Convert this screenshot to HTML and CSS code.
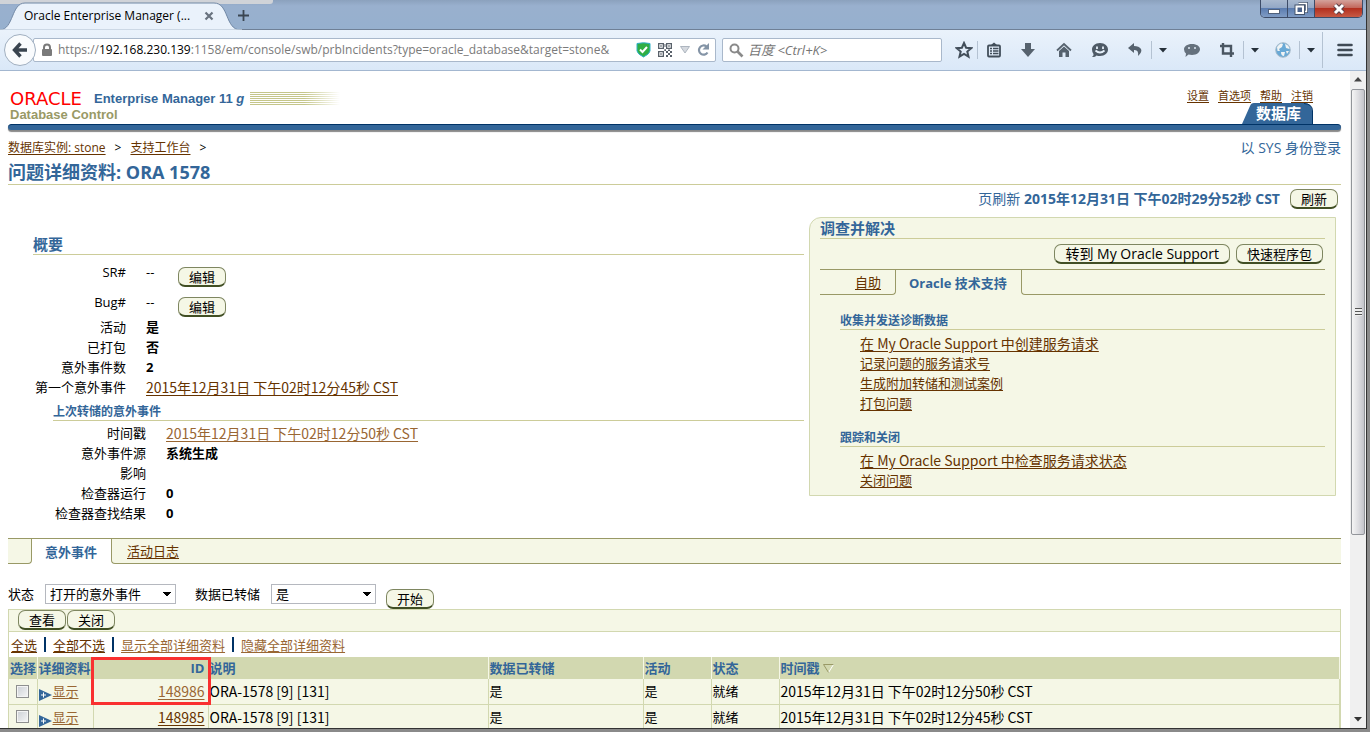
FILE: index.html
```html
<!DOCTYPE html>
<html lang="zh-CN">
<head>
<meta charset="utf-8">
<title>Oracle Enterprise Manager</title>
<link rel="stylesheet" href="styles.css">
</head>
<body>
<div class="window">
  <div class="titlebar">
    <div class="backdrop-tab"></div>
    <div class="tab">
      <svg class="tab-shape" width="242" height="30" viewBox="0 0 242 30"><path d="M0 30C14 29 11 3 25 3H214C229 3 225 29 240 30Z" fill="#eaf2fb" stroke="#7188a5"/><path d="M0 30H242" stroke="#eaf2fb"/></svg>
      <span class="tab-title">Oracle Enterprise Manager (...</span>
      <button class="plain tab-close" aria-label="关闭标签"><svg width="10" height="10" viewBox="0 0 10 10"><path d="M1.500 1.500L8.500 8.500M8.500 1.500L1.500 8.500" stroke="#69737f" stroke-width="2.200"/></svg></button>
    </div>
    <button class="plain tab-new" aria-label="新标签"><svg width="11" height="11" viewBox="0 0 11 11"><path d="M5.500 0V11M0 5.500H11" stroke="#3b4652" stroke-width="1.800"/></svg></button>
    <div class="win-controls">
      <button class="win-btn" aria-label="最小化"><svg width="14" height="12" viewBox="0 0 14 12"><rect x="1.500" y="6.500" width="11" height="4" fill="#fff" stroke="#50617c"/></svg></button>
      <button class="win-btn" aria-label="还原"><svg width="14" height="13" viewBox="0 0 14 13"><path d="M4.500 1.500H12.500V9.500H10" fill="none" stroke="#46566f" stroke-width="3"/><path d="M4.500 1.500H12.500V9.500H10" fill="none" stroke="#fff" stroke-width="1.400"/><rect x="2.500" y="4.500" width="6.500" height="6.500" fill="#4c648d" stroke="#46566f" stroke-width="4"/><rect x="2.500" y="4.500" width="6.500" height="6.500" fill="#4c648d" stroke="#fff" stroke-width="2"/></svg></button>
      <button class="win-btn win-close" aria-label="关闭"><svg width="14" height="12" viewBox="0 0 14 12"><path d="M3 2L11 10M11 2L3 10" stroke="#5b4048" stroke-width="5"/><path d="M3 2L11 10M11 2L3 10" stroke="#fff" stroke-width="3"/></svg></button>
    </div>
  </div>

  <div class="toolbar">
    <button class="plain back" aria-label="后退"><svg width="16" height="16" viewBox="0 0 16 16"><path d="M8.500 1.500L2.500 8L8.500 14.500M3 8H15" fill="none" stroke="#39444f" stroke-width="3.400"/></svg></button>
    <div class="urlbar">
      <svg width="12" height="14" viewBox="0 0 12 14"><path d="M3 7V4.500a3 3 0 0 1 6 0V7" fill="none" stroke="#7a7a7a" stroke-width="2"/><rect x="1" y="6" width="10" height="7" rx="1" fill="#7a7a7a"/></svg>
      <div class="url">https://<b>192.168.230.139</b>:1158/em/console/swb/prbIncidents?type=oracle_database&amp;target=stone&amp;</div>
      <svg width="15" height="16" viewBox="0 0 15 16"><path d="M1 1.500Q7.500 0 14 1.500V9Q13.500 12 7.500 15Q1.500 12 1 9Z" fill="#2fae44" stroke="#2fb0c8"/><path d="M4 7.500L6.500 10L11 5" fill="none" stroke="#fff" stroke-width="2"/></svg>
      <svg width="15" height="15" viewBox="0 0 15 15" fill="#59616a"><path fill-rule="evenodd" d="M0 0H6V6H0ZM1.300 1.300V4.700H4.700V1.300ZM8 0H14V6H8ZM9.300 1.300V4.700H12.700V1.300ZM0 8H6V14H0ZM1.300 9.300V12.700H4.700V9.300Z"/><path d="M2.300 2.300H3.700V3.700H2.300ZM10.300 2.300H11.700V3.700H10.300ZM2.300 10.300H3.700V11.700H2.300ZM6.500 1H7.500V4H6.500ZM8 8H10V10H8ZM12 8H14V10H12ZM10 10H12V12H10ZM8 12H10V14H8ZM12 12H14V14H12ZM6.300 6.300H8V8H6.300ZM10 6.500H12V8H10Z"/></svg>
      <svg width="10" height="8" viewBox="0 0 10 8"><path d="M.5 .5H9.500L5 7Z" fill="#d5d9df" stroke="#adb5bf"/></svg>
      <svg width="13" height="14" viewBox="0 0 13 14"><path d="M10.500 9.500A4.600 4.600 0 1 1 9.500 3.500" fill="none" stroke="#8494a6" stroke-width="2.200"/><path d="M12 0V6.500H5.500Z" fill="#8494a6"/></svg>
    </div>
    <div class="searchbar">
      <svg width="15" height="15" viewBox="0 0 15 15"><circle cx="5.500" cy="5.500" r="4" fill="none" stroke="#8a8a8a" stroke-width="2"/><path d="M8.500 8.500L13.500 13.500" stroke="#8a8a8a" stroke-width="2.600"/></svg>
      <input type="text" aria-label="搜索" placeholder="百度 &lt;Ctrl+K&gt;">
    </div>
    <button class="plain tool tool-star" aria-label="收藏"><svg width="18" height="18" viewBox="0 0 18 18"><path d="M9 2L11.100 6.700L16.200 7.200L12.300 10.600L13.500 15.600L9 12.900L4.500 15.600L5.700 10.600L1.800 7.200L6.900 6.700Z" fill="none" stroke="#424e5a" stroke-width="2"/></svg></button>
    <button class="plain tool tool-list" aria-label="书签"><svg width="16" height="16" viewBox="0 0 16 16"><path d="M5 3L8 .5L11 3" fill="#424e5a"/><rect x="2" y="3.500" width="12" height="11" rx="1" fill="none" stroke="#424e5a" stroke-width="1.800"/><path d="M4 6.500H6M7 6.500H12.500M4 9H6M7 9H12.500M4 11.500H6M7 11.500H12.500" stroke="#424e5a" stroke-width="1.500"/></svg></button>
    <button class="plain tool" aria-label="下载"><svg width="16" height="16" viewBox="0 0 16 16"><path d="M5 1H11V7H15L8 15L1 7H5Z" fill="#56626e"/></svg></button>
    <button class="plain tool" aria-label="主页"><svg width="16" height="16" viewBox="0 0 16 16"><path d="M1 8.500L8 2L15 8.500" fill="none" stroke="#56626e" stroke-width="1.800"/><path d="M3 9L8 4.500L13 9V15H9.500V10.500H6.500V15H3Z" fill="#56626e"/></svg></button>
    <button class="plain tool" aria-label="会话"><svg width="18" height="16" viewBox="0 0 18 16"><path d="M9 1C14 1 17 4 17 7.500S14 14 9 14Q7 14 5.500 13.500Q4 15.500 1 15Q3 13.500 2.500 12Q1 10 1 7.500C1 4 4 1 9 1Z" fill="#4e5a66"/><path d="M4.500 8.500Q9 12.500 13.500 8.500" fill="none" stroke="#e6f0fa" stroke-width="1.800"/><path d="M6 4.500V7M12 4.500V7" stroke="#e6f0fa" stroke-width="1.800"/></svg></button>
    <button class="plain tool tool-split" aria-label="撤销"><svg width="16" height="16" viewBox="0 0 16 16"><path d="M7 1L1 6L7 11V8Q12 7.500 11 14Q15.500 10 14 7Q12 4 7 4Z" fill="#56626e"/></svg></button>
    <button class="plain caret" aria-label="撤销菜单"><svg width="8" height="5" viewBox="0 0 8 5"><path d="M0 0H8L4 4.500Z" fill="#25303a"/></svg></button>
    <button class="plain tool" aria-label="消息"><svg width="18" height="16" viewBox="0 0 18 16"><path d="M9 2C14 2 17 4.500 17 7.300S14 13 9 13Q7 13 5.500 12.600L2.500 15L3 11.500Q1 9.700 1 7.300C1 4.500 4 2 9 2Z" fill="#65717d"/><path d="M6 5V7M12 5V7" stroke="#dfeaf5" stroke-width="1.500"/></svg></button>
    <button class="plain tool tool-split" aria-label="截图"><svg width="16" height="16" viewBox="0 0 16 16"><path d="M4 1V11.500H15M1 4H12V15" fill="none" stroke="#4a5662" stroke-width="2.400"/></svg></button>
    <button class="plain caret" aria-label="截图菜单"><svg width="8" height="5" viewBox="0 0 8 5"><path d="M0 0H8L4 4.500Z" fill="#25303a"/></svg></button>
    <button class="plain tool tool-split" aria-label="网络"><svg width="16" height="16" viewBox="0 0 16 16"><circle cx="8" cy="8" r="7.300" fill="#69a9d6" stroke="#a9bccb"/><path d="M2 5Q5 0 8 2L7 5L4 7L5 9L2.500 9ZM10 2Q14 3 14.500 7L11 6ZM6 10L10 10L9 14Q6 14 6 10ZM11 9L14 9L12 12Z" fill="#f0f3f4"/></svg></button>
    <button class="plain caret" aria-label="网络菜单"><svg width="8" height="5" viewBox="0 0 8 5"><path d="M0 0H8L4 4.500Z" fill="#25303a"/></svg></button>
    <button class="plain menu" aria-label="菜单"><svg width="16" height="14" viewBox="0 0 16 14"><path d="M1.500 2H14.500M1.500 7H14.500M1.500 12H14.500" stroke="#3f4a55" stroke-width="2.600" stroke-linecap="round"/></svg></button>
  </div>

  <div class="viewport">
    <main class="page">
      <header class="brand">
        <div class="brand-left">
          <div class="brand-row"><span class="oracle">ORACLE</span><span class="product">Enterprise Manager 11<i> g</i></span><span class="stripes"></span></div>
          <div class="control">Database Control</div>
        </div>
        <div class="brand-right">
          <nav class="global"><a href="#">设置</a><a href="#">首选项</a><a href="#">帮助</a><a href="#">注销</a></nav>
          <div class="db-tab"><svg width="71" height="21" viewBox="0 0 71 21"><path d="M0 21L8 3Q9 0 12 0H62Q70 0 70 8V21Z" fill="#336699"/><path d="M62 .5Q70.500 1 70.500 8V21" fill="none" stroke="#003366"/></svg><span>数据库</span></div>
        </div>
      </header>
      <div class="bar"></div>

      <div class="crumb-row">
        <nav class="crumbs"><a href="#">数据库实例: stone</a><span>&gt;</span><a href="#">支持工作台</a><span>&gt;</span></nav>
        <div class="login">以 SYS 身份登录</div>
      </div>
      <h1>问题详细资料: ORA 1578</h1>
      <div class="refresh"><span>页刷新 <b>2015年12月31日 下午02时29分52秒 CST</b></span><button class="btn">刷新</button></div>

      <div class="columns">
        <section class="summary">
          <h2>概要</h2>
          <dl>
            <dt class="tall">SR#</dt><dd class="tall"><span class="dash">--</span><button class="btn">编辑</button></dd>
            <dt class="tall">Bug#</dt><dd class="tall"><span class="dash">--</span><button class="btn">编辑</button></dd>
            <dt>活动</dt><dd><b>是</b></dd>
            <dt>已打包</dt><dd><b>否</b></dd>
            <dt>意外事件数</dt><dd><b>2</b></dd>
            <dt>第一个意外事件</dt><dd><a class="date" href="#">2015年12月31日 下午02时12分45秒 CST</a></dd>
          </dl>
          <div class="nested">
            <h3>上次转储的意外事件</h3>
            <dl>
              <dt>时间戳</dt><dd><a class="date visited" href="#">2015年12月31日 下午02时12分50秒 CST</a></dd>
              <dt>意外事件源</dt><dd><b>系统生成</b></dd>
              <dt>影响</dt><dd></dd>
              <dt>检查器运行</dt><dd><b>0</b></dd>
              <dt>检查器查找结果</dt><dd><b>0</b></dd>
            </dl>
          </div>
        </section>

        <aside class="panel">
          <h2>调查并解决</h2>
          <div class="panel-actions"><button class="btn latin">转到 My Oracle Support</button><button class="btn">快速程序包</button></div>
          <div class="subtabs"><div class="off"><a href="#">自助</a></div><div class="on">Oracle 技术支持</div><div class="rest"></div></div>
          <div class="group">
            <h3>收集并发送诊断数据</h3>
            <ul>
              <li><a class="latin" href="#">在 My Oracle Support 中创建服务请求</a></li>
              <li><a href="#">记录问题的服务请求号</a></li>
              <li><a href="#">生成附加转储和测试案例</a></li>
              <li><a href="#">打包问题</a></li>
            </ul>
          </div>
          <div class="group">
            <h3>跟踪和关闭</h3>
            <ul>
              <li><a class="latin" href="#">在 My Oracle Support 中检查服务请求状态</a></li>
              <li><a href="#">关闭问题</a></li>
            </ul>
          </div>
        </aside>
      </div>

      <div class="maintabs"><div class="stub"></div><div class="current">意外事件</div><div class="rest"><a href="#">活动日志</a></div></div>

      <form class="filter">
        <label for="status">状态</label>
        <select id="status" class="wide"><option>打开的意外事件</option></select>
        <label for="dumped">数据已转储</label>
        <select id="dumped"><option>是</option></select>
        <button class="btn" type="button">开始</button>
      </form>

      <div class="grid">
        <div class="grid-actions"><button class="btn">查看</button><button class="btn">关闭</button></div>
        <div class="grid-links"><a href="#">全选</a><i></i><a href="#">全部不选</a><i></i><a class="visited" href="#">显示全部详细资料</a><i></i><a class="visited" href="#">隐藏全部详细资料</a></div>
        <table>
          <colgroup><col class="c-sel"><col class="c-det"><col class="c-id"><col class="c-desc"><col class="c-dump"><col class="c-small"><col class="c-small"><col></colgroup>
          <thead><tr><th>选择</th><th>详细资料</th><th class="id">ID<span class="mark"></span></th><th>说明</th><th>数据已转储</th><th>活动</th><th>状态</th><th>时间戳 <svg width="11" height="9" viewBox="0 0 11 9"><path d="M10.500 .5L5.500 8.500" stroke="#fff"/><path d="M10.500 .5H.5L5.500 8.500" fill="none" stroke="#999966"/></svg></th></tr></thead>
          <tbody>
            <tr><td class="pick"><input type="checkbox" aria-label="选择 148986"></td><td><a class="visited show" href="#"><svg width="13" height="12" viewBox="0 0 13 12"><path d="M0 0L13 6L0 12Z" fill="#336699"/><path d="M2 6H7M4.500 3.500V8.500" stroke="#fff"/></svg>显示</a></td><td class="id"><a class="visited" href="#">148986</a></td><td class="text">ORA-1578 [9] [131]</td><td>是</td><td>是</td><td>就绪</td><td class="text">2015年12月31日 下午02时12分50秒 CST</td></tr>
            <tr><td class="pick"><input type="checkbox" aria-label="选择 148985"></td><td><a class="visited show" href="#"><svg width="13" height="12" viewBox="0 0 13 12"><path d="M0 0L13 6L0 12Z" fill="#336699"/><path d="M2 6H7M4.500 3.500V8.500" stroke="#fff"/></svg>显示</a></td><td class="id"><a href="#">148985</a></td><td class="text">ORA-1578 [9] [131]</td><td>是</td><td>是</td><td>就绪</td><td class="text">2015年12月31日 下午02时12分45秒 CST</td></tr>
          </tbody>
        </table>
      </div>
    </main>
    <div class="scrollbar">
      <svg width="8" height="5" viewBox="0 0 8 5"><path d="M0 4.500L4 0L8 4.500Z" fill="#444"/></svg>
      <div class="track"><div class="thumb"><i></i></div></div>
      <svg width="8" height="5" viewBox="0 0 8 5"><path d="M0 0L4 4.500L8 0Z" fill="#333"/></svg>
    </div>
  </div>
</div>
</body>
</html>
```
FILE: styles.css
```css
* { box-sizing: border-box; }

body {
  margin: 0;
  height: 100vh;
  padding: 0 3px 3px 0;
  overflow: hidden;
  background: #8a8a8a;
  color: #000;
  font: 13px/20px "Open Sans", "Noto Sans CJK SC", sans-serif;
}

h1, h2, h3, dl, dd, ul { margin: 0; padding: 0; }
ul { list-style: none; }
svg { flex: none; display: block; }
a { color: #663300; text-decoration: underline; text-underline-offset: 2px; }
a.visited { color: #996633; }
button { font: inherit; color: inherit; }

.plain {
  display: flex;
  align-items: center;
  justify-content: center;
  padding: 0;
  border: 0;
  background: none;
}

.window {
  display: flex;
  flex-direction: column;
  height: 100%;
  border-right: 1px solid #333;
  border-bottom: 1px solid #333;
  background: #fff;
}

/* title bar */
.titlebar {
  position: relative;
  display: flex;
  flex: none;
  height: 30px;
  border-bottom: 1px solid #6f8096;
  background: linear-gradient(#8ba1bd, #99b0ce 20%, #96b0ce);
}
.backdrop-tab {
  position: absolute;
  top: 0;
  left: 0;
  width: 20%;
  height: 4px;
  border-radius: 0 0 3px 0;
  background: #d0d3d8;
}
.tab {
  position: relative;
  display: flex;
  align-items: center;
  width: 236px;
  height: 30px;
  padding: 2px 0 0 24px;
  font-size: 12px;
}
.tab-shape { position: absolute; top: 0; left: 0; }
.tab-title { position: relative; flex: none; width: 180px; white-space: nowrap; }
.tab-close { position: relative; }
.tab-new { width: 14px; height: 30px; }
.win-controls {
  display: flex;
  height: 18px;
  margin: 0 3px 0 auto;
  border: 1px solid #3d4c68;
  border-top: 0;
  border-radius: 0 0 5px 5px;
  overflow: hidden;
}
.win-btn {
  display: flex;
  align-items: center;
  justify-content: center;
  width: 27px;
  padding: 0;
  border: 0;
  border-right: 1px solid #3d4c68;
  background: linear-gradient(#a9b9cf, #93a8c6 45%, #5c7db0 50%, #7f9bc4);
}
.win-close { width: 47px; border-right: 0; background: linear-gradient(#d4a29b, #c3685c 45%, #b3301f 50%, #c75a44); }

/* navigation bar */
.toolbar {
  display: flex;
  flex: none;
  align-items: center;
  height: 41px;
  padding-left: 4px;
  border-bottom: 1px solid #a3b7d0;
  background: linear-gradient(#eaf2fb, #dae8f8);
}
.back {
  position: relative;
  flex: none;
  width: 32px;
  height: 32px;
  border: 1px solid #a0afc0;
  border-radius: 50%;
  background: #f9fbfd;
}
.urlbar, .searchbar {
  display: flex;
  align-items: center;
  height: 24px;
  border: 1px solid #a9b8cb;
  border-radius: 2px;
  background: #fff;
}
.urlbar { flex: 1; min-width: 0; gap: 7px; margin-left: -3px; padding: 0 5px 0 7px; }
.url {
  flex: 1;
  min-width: 0;
  margin-left: -2px;
  overflow: hidden;
  white-space: nowrap;
  color: #7a7a7a;
  font-size: 12px;
}
.url b { color: #000; font-weight: 400; }
.searchbar { flex: none; width: 220px; margin: 0 8px 0 6px; padding: 0 6px; gap: 4px; }
.searchbar input {
  flex: 1;
  min-width: 0;
  padding: 0;
  border: 0;
  background: none;
  font: italic 13px/20px "Open Sans", "Noto Sans CJK SC", sans-serif;
}
.searchbar input::placeholder { color: #757575; }
.tool { flex: none; width: 36px; height: 18px; }
.tool-star { width: 28px; border-right: 1px solid #b4c2d2; }
.tool-list { width: 32px; }
.tool-split { width: 33px; }
.caret { flex: none; width: 23px; height: 18px; border-left: 1px solid #b4c2d2; }
.menu { flex: none; width: 44px; height: 36px; border-left: 1px solid #b4c2d2; }

/* page area */
.viewport { display: flex; flex: 1; min-height: 0; }
.page { flex: 1; min-width: 0; overflow: hidden; padding: 16px 9px 0 8px; }
.scrollbar {
  display: flex;
  flex: none;
  flex-direction: column;
  align-items: center;
  width: 16px;
  padding: 6px 0;
  background: #f0f0f0;
}
.track { flex: 1; width: 100%; margin: 7px 0 8px; padding: 0 1px; }
.thumb {
  display: flex;
  align-items: center;
  justify-content: center;
  height: 72%;
  border: 1px solid #92959a;
  border-radius: 2px;
  background: linear-gradient(90deg, #f5f5f5, #dcdce0 55%, #c3c4ca);
}
.thumb i { width: 7px; height: 8px; background: repeating-linear-gradient(#555 0 1px, #eee 1px 3px); }

/* branding */
.brand { display: flex; justify-content: space-between; height: 37px; }
.brand-left { padding: 3px 0 0 2px; font-family: "Liberation Sans", sans-serif; font-weight: 700; line-height: 16px; }
.brand-row { display: flex; align-items: center; height: 17px; }
.oracle { width: 84px; color: #f00; font: 400 18px/16px "DejaVu Sans", sans-serif; }
.product { color: #336699; }
.stripes {
  width: 90px;
  height: 13px;
  margin-left: 6px;
  background: linear-gradient(90deg, transparent 60%, #fff), repeating-linear-gradient(#c5c68a 0 1px, #fff 1px 2px);
}
.control { color: #999966; }
.brand-right { display: flex; flex-direction: column; align-items: flex-end; padding-right: 28px; }
.global { display: flex; gap: 9px; height: 16px; font-size: 11px; line-height: 17px; }
.db-tab { position: relative; height: 21px; color: #fff; font-size: 15px; font-weight: 700; line-height: 21px; }
.db-tab span { position: absolute; top: 0; left: 14px; }
.bar {
  height: 7px;
  border-top: 1px solid #003366;
  border-bottom: 1px solid #888;
  border-radius: 4px;
  background: #336699;
  box-shadow: 0 1px 1px #888;
}

.crumb-row { display: flex; justify-content: space-between; height: 28px; padding-top: 7px; }
.crumbs { display: flex; gap: 9px; font-size: 12px; }
.login { color: #336699; font-size: 14px; }
h1, h2, h3 { border-bottom: 1px solid #cccc99; color: #336699; font-weight: 700; }
h1 { height: 26px; font-size: 18px; line-height: 26px; }
h2 { height: 20px; font-size: 15px; line-height: 18px; }
h3 { height: 20px; font-size: 12px; line-height: 22px; }
.refresh {
  display: flex;
  align-items: center;
  justify-content: flex-end;
  gap: 10px;
  height: 32px;
  padding: 0 3px 4px 0;
  color: #336699;
  font-size: 14px;
}

.btn {
  flex: none;
  min-width: 48px;
  height: 20px;
  padding: 0 10px;
  border: 1px solid #7e8660;
  border-bottom: 2px solid #414f24;
  border-radius: 7px;
  background: #f5f7e6;
  color: #000;
  font-size: 13px;
  line-height: 16px;
}

.columns { display: grid; grid-template-columns: minmax(0, 771fr) minmax(0, 527fr); align-items: start; gap: 5px; padding: 0 5px 0 25px; }
.summary { padding-top: 18px; }
dl { display: grid; grid-template-columns: 93px 1fr; column-gap: 20px; padding-top: 2px; }
dt { text-align: right; white-space: nowrap; }
dt, dd { height: 20px; }
dt.tall, dd.tall { height: 30px; line-height: 30px; }
dd.tall { display: flex; align-items: flex-end; }
dd .dash { width: 32px; }
.date, a.latin, td.id, td.text { font-family: "Noto Sans CJK SC", sans-serif; font-size: 14px; }
.nested { padding: 4px 0 0 20px; }

.panel {
  padding: 1px 10px 5px;
  border: 1px solid #d2d8b0;
  border-radius: 12px 0 0 0;
  background: #f5f7e6;
}
.panel-actions { display: flex; justify-content: flex-end; gap: 6px; padding: 5px 2px; }
.btn.latin { font-size: 14px; }
.subtabs, .maintabs { display: flex; border-top: 1px solid #999966; }
.subtabs > div, .maintabs > div { height: 25px; border-bottom: 1px solid #999966; line-height: 24px; }
.subtabs .off { width: 76px; padding-right: 14px; border-right: 1px solid #999966; border-radius: 0 0 4px 0; text-align: right; }
.subtabs .on { padding: 1px 14px 0 13px; border-bottom: 0; color: #336699; font-weight: 700; }
.rest { flex: 1; border-left: 1px solid #999966; border-radius: 0 0 0 4px; }
.group { padding: 15px 0 0 20px; }
.group + .group { padding-top: 14px; }
.group ul { padding: 3px 0 0 20px; }
.group li { height: 20px; }

/* incidents */
.maintabs { margin-top: 15px; }
.maintabs > div { background: #f5f7e6; }
.maintabs .stub { width: 24px; border-right: 1px solid #999966; border-radius: 0 0 4px 0; }
.maintabs .current { padding: 1px 14px 0 13px; border-bottom: 0; background: #fff; color: #336699; font-weight: 700; }
.maintabs .rest { padding-left: 15px; }

.filter { display: flex; align-items: center; height: 45px; padding-top: 15px; }
.filter label { margin-right: 11px; }
.filter .btn { align-self: flex-end; margin-left: 10px; }
select {
  width: 105px;
  height: 20px;
  padding: 0 20px 0 4px;
  border: 1px solid #b5b8bf;
  appearance: none;
  background: linear-gradient(45deg, transparent 50%, #000 50%) right 8px center / 4px 4px no-repeat, linear-gradient(-45deg, transparent 50%, #000 50%) right 4px center / 4px 4px no-repeat, #fff;
  color: #000;
  font: inherit;
  line-height: 18px;
}
select.wide { width: 131px; margin-right: 19px; }

.grid { border: 1px solid #d2d8b0; border-bottom: 0; }
.grid-actions { display: flex; gap: 1px; height: 22px; padding-left: 9px; border-bottom: 1px solid #d2d8b0; background: #f5f7e6; }
.grid-links { display: flex; align-items: center; height: 25px; padding: 2px; }
.grid-links i { width: 2px; height: 15px; margin: 0 7px; background: #003366; }
table { width: 100%; border-collapse: collapse; table-layout: fixed; }
.c-sel { width: 28px; }
.c-det { width: 56px; }
.c-id { width: 115px; }
.c-desc { width: 280px; }
.c-dump { width: 155px; }
.c-small { width: 68px; }
th {
  position: relative;
  height: 22px;
  padding: 0 1px;
  border-right: 1px solid #f5f7e6;
  background: #d2d8b0;
  color: #336699;
  text-align: left;
  white-space: nowrap;
}
th svg { display: inline-block; }
td { height: 25px; padding: 0 1px; border-right: 1px solid #d2d8b0; border-bottom: 1px solid #d2d8b0; background: #f5f7e6; white-space: nowrap; }
.id { padding-right: 3px; text-align: right; }
.pick { text-align: center; line-height: 0; }
.pick input {
  width: 13px;
  height: 13px;
  margin: 0;
  border: 1px solid #8e8f8f;
  outline: 1px solid #f4f4f4;
  outline-offset: -2px;
  appearance: none;
  background: linear-gradient(135deg, #cbcfd5, #f6f6f6);
}
.pick input:checked { background: #336699; }
.show { display: flex; align-items: flex-end; gap: 1px; }
.mark { position: absolute; z-index: 1; top: 0; left: -3px; width: calc(100% + 6px); height: 48px; border: 3px solid #f93030; }
```
